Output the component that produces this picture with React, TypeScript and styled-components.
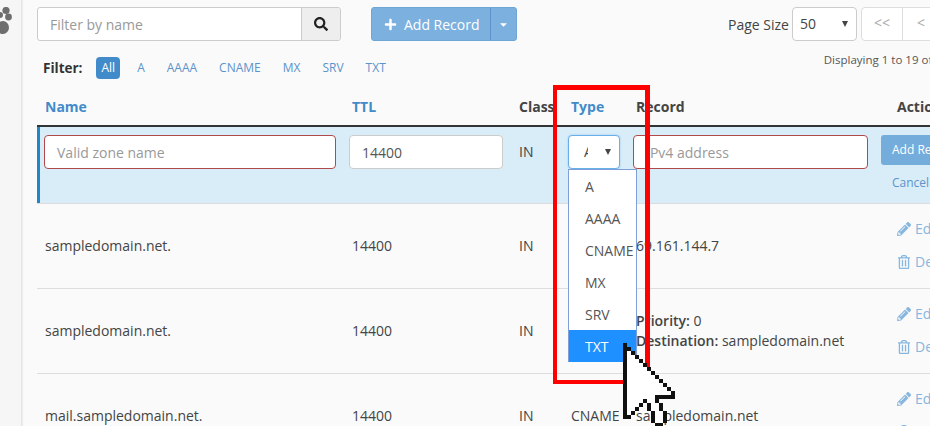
import styled, { createGlobalStyle } from 'styled-components'
import { FaCaretDown, FaPencilAlt, FaPlus, FaRegTrashAlt, FaSearch } from 'react-icons/fa'

const GlobalStyle = createGlobalStyle`
  html, body {
    margin: 0;
    padding: 0;
    background: #fafafa;
  }
  body {
    font-family: 'Open Sans', sans-serif;
    font-size: 14px;
    color: #444;
  }
`

const Page = styled.div`
  position: relative;
  display: flex;
  width: 930px;
  height: 426px;
  overflow: hidden;
  background: #fafafa;
`

const Sidebar = styled.aside`
  flex: 0 0 21px;
  background: #f6f6f6;
  border-right: 1px solid #e4e4e4;
  box-shadow: 1px 0 1px #eee;
  padding-top: 7px;
  svg {
    display: block;
  }
`

const Main = styled.main`
  flex: 0 0 1040px;
  padding: 7px 0 0 15px;
`

const Toolbar = styled.div`
  display: flex;
  align-items: stretch;
  height: 34px;
`

const SearchBox = styled.div`
  display: flex;
  box-sizing: border-box;
  width: 304px;
  border: 1px solid #ccc;
  border-radius: 3px;
  overflow: hidden;
  background: #fff;
`

const SearchInput = styled.div`
  flex: 1;
  padding-left: 12px;
  line-height: 33px;
  color: #999;
`

const SearchButton = styled.div`
  flex: 0 0 38px;
  display: flex;
  align-items: center;
  justify-content: center;
  background: #eee;
  border-left: 1px solid #ccc;
  color: #222;
  font-size: 14px;
`

const AddGroup = styled.div`
  display: flex;
  margin-left: 30px;
  color: #fff;
  background: #7cb0de;
  border-radius: 3px;
  border: 1px solid #6fa6d8;
`

const AddMain = styled.div`
  display: flex;
  align-items: center;
  gap: 7px;
  width: 119px;
  padding-left: 12px;
  box-sizing: border-box;
  font-size: 14px;
  border-right: 1px solid #5a93c9;
`

const AddCaret = styled.div`
  flex: 0 0 25px;
  display: flex;
  align-items: center;
  justify-content: center;
  font-size: 11px;
`

const PageSize = styled.div`
  display: flex;
  align-items: center;
  margin-left: 211px;
  gap: 3px;
  color: #444;
`

const SizeSelect = styled.div`
  position: relative;
  width: 65px;
  height: 34px;
  box-sizing: border-box;
  border: 1px solid #ccc;
  border-radius: 4px;
  background: #fff;
  padding-left: 7px;
  line-height: 32px;
`

const SelectArrow = styled.span`
  position: absolute;
  right: 8px;
  top: 13px;
  width: 0;
  height: 0;
  border-left: 3px solid transparent;
  border-right: 3px solid transparent;
  border-top: 6px solid #444;
`

const Pager = styled.div`
  display: flex;
  height: 34px;
  margin-left: 1px;
  box-sizing: border-box;
  background: #fff;
  border: 1px solid #ddd;
  border-radius: 4px;
`

const PagerCell = styled.div<{ $width: number }>`
  width: ${({ $width }) => $width}px;
  line-height: 30px;
  text-align: center;
  color: #aaa;
  border-right: 1px solid #ddd;
`

const FilterRow = styled.div`
  display: flex;
  align-items: center;
  height: 22px;
  margin: 16px 0 0 6px;
  font-size: 12px;
`

const FilterLabel = styled.strong`
  color: #333;
  font-size: 13.5px;
  margin-right: 14px;
`

const FilterPill = styled.span<{ $active?: boolean }>`
  padding: 0 ${({ $active }) => ($active ? 5 : 8)}px;
  margin-right: ${({ $active }) => ($active ? 9 : 6)}px;
  line-height: 22px;
  border-radius: 4px;
  color: ${({ $active }) => ($active ? '#fff' : '#5b93cb')};
  background: ${({ $active }) => ($active ? '#428bca' : 'transparent')};
`

const Displaying = styled.span`
  position: relative;
  top: -9px;
  margin-left: 424px;
  font-size: 11.5px;
  color: #555;
  white-space: nowrap;
`

const Grid = styled.div`
  display: grid;
  grid-template-columns: 307px 167px 52px 65px 261px 126px;
  align-items: center;
`

const HeadRow = styled(Grid)`
  height: 37px;
  margin-top: 9px;
  border-bottom: 2px solid #333;
  box-sizing: content-box;
`

const HeadCell = styled.div<{ $sorted?: boolean }>`
  padding-left: 8px;
  font-weight: 700;
  white-space: nowrap;
  color: ${({ $sorted }) => ($sorted ? '#428bca' : '#444')};
`

const EditRow = styled(Grid)`
  align-items: start;
  box-sizing: border-box;
  height: 77px;
  background: #d9edf9;
  box-shadow: inset 3px 0 0 #1f87c5;
  border-bottom: 1px solid #ddd;
  padding-top: 8px;
`

const EditCell = styled.div<{ $pad?: number }>`
  position: relative;
  padding-left: ${({ $pad }) => $pad ?? 5}px;
`

const TextField = styled.div<{ $invalid?: boolean; $width: number }>`
  box-sizing: border-box;
  width: ${({ $width }) => $width}px;
  height: 34px;
  padding-left: 12px;
  line-height: 34px;
  background: #fff;
  border: 1px solid ${({ $invalid }) => ($invalid ? '#b04a4a' : '#ccc')};
  border-radius: 4px;
  color: ${({ $invalid }) => ($invalid ? '#999' : '#555')};
  white-space: nowrap;
  overflow: hidden;
`

const ClassText = styled.div`
  padding-left: 8px;
  line-height: 34px;
`

const TypeSelect = styled.div`
  position: relative;
  box-sizing: border-box;
  width: 52px;
  height: 34px;
  background: #fff;
  border: 1px solid #66afe9;
  border-radius: 4px;
  box-shadow: 0 0 2px rgba(102, 175, 233, 0.6);
`

const ClippedValue = styled.span`
  position: absolute;
  left: 15px;
  top: 0;
  width: 4px;
  overflow: hidden;
  line-height: 32px;
`

const TypeMenu = styled.ul`
  position: absolute;
  left: 5px;
  top: 34px;
  z-index: 2;
  width: 69px;
  box-sizing: border-box;
  margin: 0;
  padding: 0;
  list-style: none;
  background: #fff;
  border: 1px solid #7f9fd8;
  border-bottom: 0;
`

const TypeOption = styled.li<{ $selected?: boolean }>`
  height: 32px;
  line-height: 34px;
  padding-left: 16px;
  white-space: nowrap;
  color: ${({ $selected }) => ($selected ? '#fff' : '#555')};
  background: ${({ $selected }) => ($selected ? '#1e90ff' : 'transparent')};
`

const AddButton = styled.div`
  box-sizing: border-box;
  width: 90px;
  height: 30px;
  margin-left: -8px;
  padding-left: 11px;
  font-size: 12px;
  line-height: 30px;
  color: #fff;
  white-space: nowrap;
  background: #74acdc;
  border-radius: 3px;
`

const CancelLink = styled.div`
  margin: 9px 0 0 3px;
  font-size: 12px;
  color: #5b93cb;
`

const DataRow = styled(Grid)`
  height: 85px;
  box-sizing: border-box;
  padding-bottom: 2px;
  border-bottom: 1px solid #ddd;
`

const DataCell = styled.div`
  padding-left: 8px;
  white-space: nowrap;
  color: #444;
`

const RecordStack = styled(DataCell)`
  padding-top: 2px;
`

const RecordLine = styled.div`
  line-height: 20px;
  white-space: nowrap;
  strong {
    font-weight: 600;
  }
`

const ActionList = styled.div`
  display: flex;
  flex-direction: column;
  gap: 13px;
  padding-left: 8px;
  color: #87b6df;
`

const ActionLink = styled.div`
  display: flex;
  align-items: center;
  gap: 4px;
  line-height: 20px;
  svg {
    font-size: 14px;
  }
`

const Highlight = styled.div`
  position: absolute;
  left: 553px;
  top: 85px;
  z-index: 3;
  width: 97px;
  height: 299px;
  box-sizing: border-box;
  border: 5px solid #fe0000;
  border-bottom-width: 4px;
  border-left-width: 4px;
  pointer-events: none;
`

const CursorArt = styled.svg`
  position: absolute;
  left: 623px;
  top: 343px;
  z-index: 4;
`

const cursorRows = [
  'X',
  'XX',
  'X.X',
  'X..X',
  'X...X',
  'X....X',
  'X.....X',
  'X......X',
  'X.......X',
  'X........X',
  'X.........X',
  'X..........X',
  'X...........X',
  'X.......XXXXX',
  'X....X..X',
  'X...X X..X',
  'X..X  X..X',
  'X.X    X..X',
  'XX     X..X',
  '       X..X',
  '        XX',
]

const Cursor = () => (
  <CursorArt width={52} height={84} viewBox="0 0 13 21" shapeRendering="crispEdges">
    {cursorRows.flatMap((row, y) =>
      row.split('').map((cell, x) =>
        cell === ' ' ? null : (
          <rect key={`${x}-${y}`} x={x} y={y} width={1} height={1} fill={cell === 'X' ? '#111' : '#fff'} />
        )
      )
    )}
  </CursorArt>
)

const PawIcon = () => (
  <svg width={14} height={28} viewBox="0 0 14 28" fill="#6e6e6e">
    <circle cx={6} cy={3.5} r={3.6} />
    <circle cx={8.5} cy={10} r={3.4} />
    <circle cx={0} cy={8} r={3} />
    <ellipse cx={3} cy={20.5} rx={6} ry={6.5} />
  </svg>
)

const Actions = () => (
  <ActionList>
    <ActionLink>
      <FaPencilAlt />
      Edit
    </ActionLink>
    <ActionLink>
      <FaRegTrashAlt />
      Delete
    </ActionLink>
  </ActionList>
)

const filterOptions = ['A', 'AAAA', 'CNAME', 'MX', 'SRV', 'TXT']

export default function App() {
  return (
    <Page>
      <GlobalStyle />
      <Sidebar>
        <PawIcon />
      </Sidebar>
      <Main>
        <Toolbar>
          <SearchBox>
            <SearchInput>Filter by name</SearchInput>
            <SearchButton>
              <FaSearch />
            </SearchButton>
          </SearchBox>
          <AddGroup>
            <AddMain>
              <FaPlus size={13} />
              Add Record
            </AddMain>
            <AddCaret>
              <FaCaretDown />
            </AddCaret>
          </AddGroup>
          <PageSize>
            Page Size
            <SizeSelect>
              50
              <SelectArrow />
            </SizeSelect>
            <Pager>
              <PagerCell $width={40}>&lt;&lt;</PagerCell>
              <PagerCell $width={36}>&lt;</PagerCell>
            </Pager>
          </PageSize>
        </Toolbar>
        <FilterRow>
          <FilterLabel>Filter:</FilterLabel>
          <FilterPill $active>All</FilterPill>
          {filterOptions.map((option) => (
            <FilterPill key={option}>{option}</FilterPill>
          ))}
          <Displaying>Displaying 1 to 19 of 19 records</Displaying>
        </FilterRow>
        <HeadRow>
          <HeadCell $sorted>Name</HeadCell>
          <HeadCell $sorted>TTL</HeadCell>
          <HeadCell>Class</HeadCell>
          <HeadCell $sorted>Type</HeadCell>
          <HeadCell>Record</HeadCell>
          <HeadCell>Actions</HeadCell>
        </HeadRow>
        <EditRow>
          <EditCell $pad={7}>
            <TextField $invalid $width={292}>
              Valid zone name
            </TextField>
          </EditCell>
          <EditCell>
            <TextField $width={154}>14400</TextField>
          </EditCell>
          <ClassText>IN</ClassText>
          <EditCell>
            <TypeSelect>
              <ClippedValue>A</ClippedValue>
              <SelectArrow />
            </TypeSelect>
            <TypeMenu>
              {filterOptions.map((option) => (
                <TypeOption key={option} $selected={option === 'TXT'}>
                  {option}
                </TypeOption>
              ))}
            </TypeMenu>
          </EditCell>
          <EditCell>
            <TextField $invalid $width={235}>
              IPv4 address
            </TextField>
          </EditCell>
          <EditCell $pad={0}>
            <AddButton>Add Record</AddButton>
            <CancelLink>Cancel</CancelLink>
          </EditCell>
        </EditRow>
        <DataRow>
          <DataCell>sampledomain.net.</DataCell>
          <DataCell>14400</DataCell>
          <DataCell>IN</DataCell>
          <DataCell>A</DataCell>
          <DataCell>69.161.144.7</DataCell>
          <Actions />
        </DataRow>
        <DataRow>
          <DataCell>sampledomain.net.</DataCell>
          <DataCell>14400</DataCell>
          <DataCell>IN</DataCell>
          <DataCell>MX</DataCell>
          <RecordStack>
            <RecordLine>
              <strong>Priority:</strong> 0
            </RecordLine>
            <RecordLine>
              <strong>Destination:</strong> sampledomain.net
            </RecordLine>
          </RecordStack>
          <Actions />
        </DataRow>
        <DataRow>
          <DataCell>mail.sampledomain.net.</DataCell>
          <DataCell>14400</DataCell>
          <DataCell>IN</DataCell>
          <DataCell>CNAME</DataCell>
          <DataCell>sampledomain.net</DataCell>
          <Actions />
        </DataRow>
      </Main>
      <Highlight />
      <Cursor />
    </Page>
  )
}
